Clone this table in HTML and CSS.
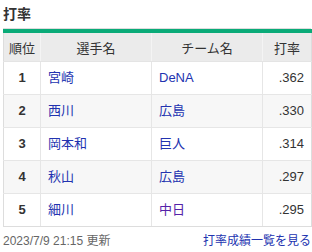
FILE: index.html
```html
<!DOCTYPE html>
<html lang="ja">
<head>
<meta charset="utf-8">
<link rel="stylesheet" href="styles.css">
</head>
<body>
<div class="wrap">
  <h2 class="title">打率</h2>
  <div class="board">
    <table class="rank">
      <colgroup>
        <col class="c-rank"><col class="c-name"><col class="c-team"><col class="c-avg">
      </colgroup>
      <thead>
        <tr><th>順位</th><th>選手名</th><th>チーム名</th><th>打率</th></tr>
      </thead>
      <tbody>
        <tr><td class="num">1</td><td><a href="#">宮崎</a></td><td><a href="#">DeNA</a></td><td class="avg">.362</td></tr>
        <tr class="alt"><td class="num">2</td><td><a href="#">西川</a></td><td><a href="#">広島</a></td><td class="avg">.330</td></tr>
        <tr><td class="num">3</td><td><a href="#">岡本和</a></td><td><a href="#">巨人</a></td><td class="avg">.314</td></tr>
        <tr class="alt"><td class="num">4</td><td><a href="#">秋山</a></td><td><a href="#">広島</a></td><td class="avg">.297</td></tr>
        <tr><td class="num">5</td><td><a href="#">細川</a></td><td><a href="#" class="visited">中日</a></td><td class="avg">.295</td></tr>
      </tbody>
    </table>
  </div>
  <div class="foot">
    <span class="date">2023/7/9 21:15 更新</span>
    <a href="#" class="more">打率成績一覧を見る</a>
  </div>
</div>
</body>
</html>
```
FILE: styles.css
```css
html, body {
  margin: 0;
  padding: 0;
  background: #fff;
}
body {
  font-family: "Liberation Sans", "Noto Sans CJK JP", sans-serif;
  color: #333;
  width: 312px;
}
.wrap {
  padding: 4px 1px 0 3px;
}
.title {
  margin: 0 0 4px;
  font-size: 14px;
  line-height: 20px;
  font-weight: bold;
  color: #333;
}
.board {
  border-top: 1px solid #ddd;
  width: 308px;
}
.rank {
  width: 308px;
  border-collapse: collapse;
  table-layout: fixed;
  border-top: 4px solid #0aab78;
  font-size: 13px;
}
.c-rank { width: 37px; }
.c-name { width: 111px; }
.c-team { width: 111px; }
.c-avg { width: 49px; }
.rank th {
  height: 28px;
  padding: 0;
  background: #ebebeb;
  font-weight: normal;
  color: #333;
  text-align: center;
  border-left: 1px solid #f4f4f4;
  border-right: 1px solid #f4f4f4;
  border-bottom: 1px solid #e4e4e4;
}
.rank th:first-child { border-left: 1px solid #ddd; }
.rank th:last-child { border-right: 1px solid #ddd; }
.rank td {
  height: 32px;
  padding: 0 7px;
  border: 1px solid #e6e6e6;
  background: #fff;
  line-height: 16px;
}
.rank tr.alt td { background: #f7f7f7; }
.rank td:first-child { border-left-color: #ddd; }
.rank td:last-child { border-right-color: #ddd; }
.rank tbody tr:last-child td { border-bottom-color: #ddd; }
.rank td.num {
  text-align: center;
  font-weight: bold;
  padding: 0;
  color: #333;
}
.rank td.avg {
  text-align: right;
  color: #333;
}
a {
  color: #2233b0;
  text-decoration: none;
}
a.visited { color: #5422a8; }
.foot {
  display: flex;
  justify-content: space-between;
  align-items: baseline;
  margin-top: 6px;
  width: 308px;
  font-size: 12px;
  line-height: 16px;
}
.date { color: #666; }
.more { color: #2233b0; }
```
